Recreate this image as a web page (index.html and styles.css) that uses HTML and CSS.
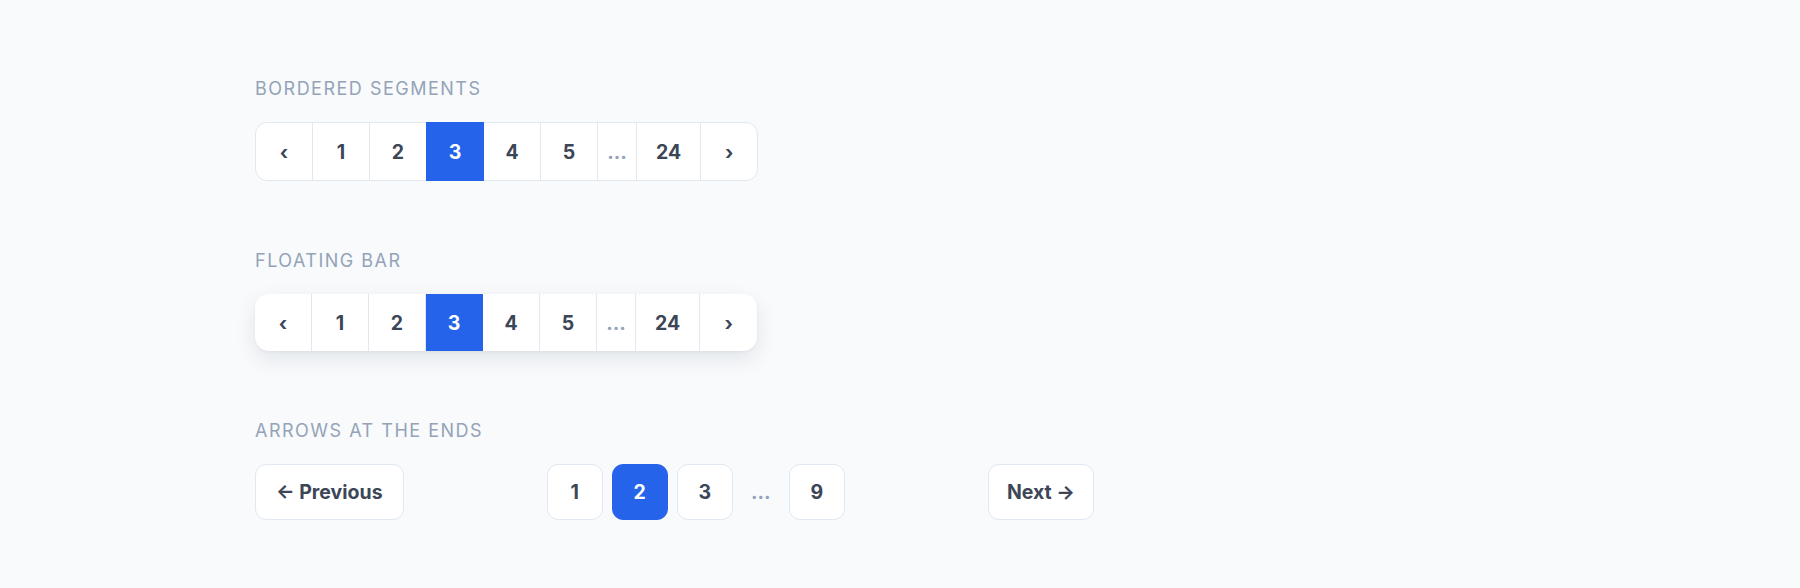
FILE: index.html
```html
<!DOCTYPE html>
<html lang="en">
<head>
    <meta charset="UTF-8">
    <meta name="viewport" content="width=device-width, initial-scale=1.0">
    <title>Pagination styles</title>
    <link rel="stylesheet" href="styles.css">
</head>
<body>

    <div class="page">

        <!-- segments share their borders -->
        <div class="section">
            <p class="label">Bordered segments</p>
            <div class="seg-bar">
                <a class="seg">&lsaquo;</a>
                <a class="seg">1</a>
                <a class="seg">2</a>
                <a class="seg active">3</a>
                <a class="seg">4</a>
                <a class="seg">5</a>
                <span class="seg dots">&hellip;</span>
                <a class="seg">24</a>
                <a class="seg">&rsaquo;</a>
            </div>
        </div>

        <!-- same pages, lifted off the page with a shadow -->
        <div class="section">
            <p class="label">Floating bar</p>
            <div class="float-bar">
                <a class="item">&lsaquo;</a>
                <a class="item">1</a>
                <a class="item">2</a>
                <a class="item active">3</a>
                <a class="item">4</a>
                <a class="item">5</a>
                <span class="item dots">&hellip;</span>
                <a class="item">24</a>
                <a class="item">&rsaquo;</a>
            </div>
        </div>

        <div class="section">
            <p class="label">Arrows at the ends</p>
            <div class="ends-row">
                <a class="btn">&larr; Previous</a>
                <div class="pages">
                    <a class="box">1</a>
                    <a class="box active">2</a>
                    <a class="box">3</a>
                    <span class="gap-dots">&hellip;</span>
                    <a class="box">9</a>
                </div>
                <a class="btn next">Next &rarr;</a>
            </div>
        </div>

    </div>

</body>
</html>
```

FILE: styles.css
```css
*{
    margin: 0;
    padding: 0;
    box-sizing: border-box;
}

body{
    background-color: #f8fafc;
    font-family: Inter, "Liberation Sans", sans-serif;
    color: #3c4657;
}

.page{
    padding: 80px 0 0 255px;
}

.section{
    margin-bottom: 71px;
}

.label{
    font-size: 18px;
    line-height: 18px;
    font-weight: 400;
    letter-spacing: 1.5px;
    text-transform: uppercase;
    color: #94a3b8;
    margin-bottom: 24px;
}

a{
    text-decoration: none;
    color: inherit;
    cursor: pointer;
}

/* bordered segments */
.seg-bar{
    display: flex;
}

.seg{
    display: flex;
    align-items: center;
    justify-content: center;
    min-width: 58px;
    height: 59px;
    padding: 0 19px;
    margin-left: -1px;
    background-color: #fff;
    border: 1px solid #e2e8f0;
    font-size: 19.5px;
    font-weight: 700;
}

.seg:first-child{
    margin-left: 0;
    border-radius: 12px 0 0 12px;
}

.seg:last-child{
    border-radius: 0 12px 12px 0;
}

.seg.active{
    position: relative;
    z-index: 1;
    background-color: #2563eb;
    border-color: #2563eb;
    color: #fff;
}

.seg.dots,
.item.dots{
    min-width: 40px;
    padding: 0;
    color: #94a3b8;
    font-weight: 700;
}

/* floating bar */
.float-bar{
    display: inline-flex;
    background-color: #fff;
    border-radius: 14px;
    overflow: hidden;
    box-shadow: 0 8px 22px rgba(15, 23, 42, 0.09), 0 1px 3px rgba(15, 23, 42, 0.05);
}

.item{
    display: flex;
    align-items: center;
    justify-content: center;
    min-width: 57px;
    height: 57px;
    padding: 0 19px;
    border-right: 1px solid #e2e8f0;
    font-size: 19.5px;
    font-weight: 700;
}

.item:last-child{
    border-right: none;
}

.item.dots{
    min-width: 39px;
}

.item.active{
    background-color: #2563eb;
    border-right-color: #2563eb;
    color: #fff;
}

/* arrows at the ends */
.ends-row{
    width: 839px;
    display: flex;
    justify-content: space-between;
    align-items: center;
}

.btn{
    display: flex;
    align-items: center;
    height: 56px;
    padding: 0 20px;
    background-color: #fff;
    border: 1px solid #e2e8f0;
    border-radius: 11px;
    font-size: 19.5px;
    font-weight: 700;
}

.btn.next{
    padding: 0 18px;
}

.pages{
    display: flex;
    align-items: center;
    gap: 9px;
}

.box{
    display: flex;
    align-items: center;
    justify-content: center;
    width: 56px;
    height: 56px;
    background-color: #fff;
    border: 1px solid #e2e8f0;
    border-radius: 11px;
    font-size: 19.5px;
    font-weight: 700;
}

.box.active{
    background-color: #2563eb;
    border-color: #2563eb;
    color: #fff;
}

.gap-dots{
    width: 38px;
    text-align: center;
    font-size: 19.5px;
    font-weight: 700;
    color: #94a3b8;
}
```
